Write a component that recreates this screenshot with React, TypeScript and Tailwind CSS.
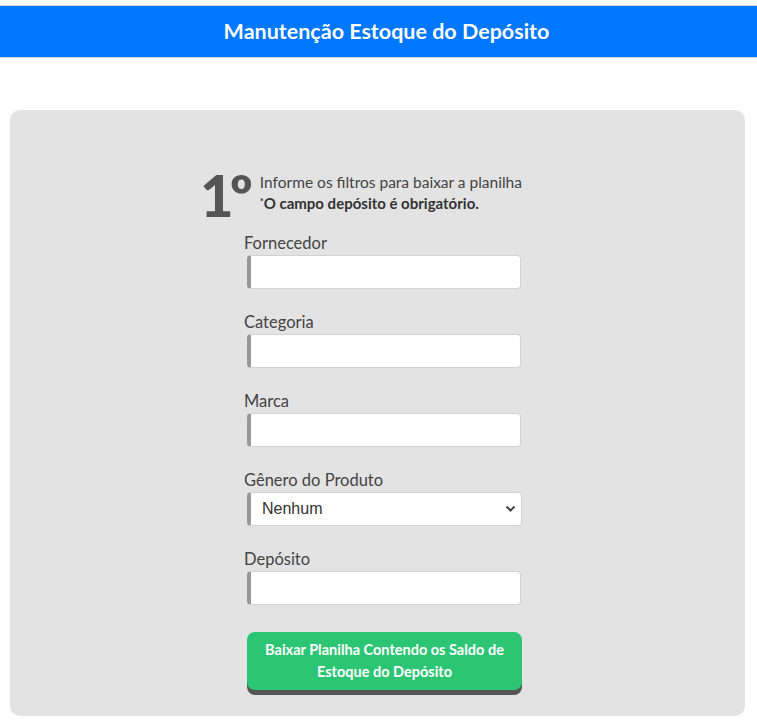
import React, { useState } from 'react';

const font = { fontFamily: 'Lato, "Open Sans", sans-serif' };

const Field = ({ label, value, onChange }: { label: string; value: string; onChange: (v: string) => void }) => (
    <div className="flex flex-col">
        <label className="text-[16.5px] text-[#444] leading-[20px]">{label}</label>
        <input
            type="text"
            value={value}
            onChange={(e) => onChange(e.target.value)}
            className="mt-[2px] ml-[3px] h-[34px] w-[274px] bg-white border border-[#d2d2d2] border-l-[4px] border-l-[#999] rounded-[4px] px-2 text-[15px] outline-none"
        />
    </div>
);

export default function App() {
    const [fornecedor, setFornecedor] = useState('');
    const [categoria, setCategoria] = useState('');
    const [marca, setMarca] = useState('');
    const [genero, setGenero] = useState('Nenhum');
    const [deposito, setDeposito] = useState('');

    return (
        <div className="min-h-screen bg-white pt-[5px]" style={font}>
            <header className="h-[53px] bg-[#0077ff] border-y border-[#d4d4d4] flex items-center justify-center pl-[16px]">
                <h1 className="text-white text-[21.5px] font-bold">Manutenção Estoque do Depósito</h1>
            </header>

            <div className="pl-[10px] pr-[12px] pt-[52px] pb-[9px]">
                <div className="bg-[#e3e3e3] rounded-[10px] pt-[60px] pb-[26px] pl-[190px]">
                    <div className="flex items-start gap-[11px]">
                        <span className="text-[58px] font-black text-[#555] leading-[50px] tracking-[-4px]">1º</span>
                        <div className="pt-[2px] text-[15.5px] text-[#444] leading-[21px]">
                            <p>Informe os filtros para baixar a planilha</p>
                            <p className="font-bold text-[#333] text-[15px]"><sup className="text-[9px]">*</sup>O campo depósito é obrigatório.</p>
                        </div>
                    </div>

                    <form className="ml-[44px] mt-[13px] flex flex-col gap-[23px]" onSubmit={(e) => e.preventDefault()}>
                        <Field label="Fornecedor" value={fornecedor} onChange={setFornecedor} />
                        <Field label="Categoria" value={categoria} onChange={setCategoria} />
                        <Field label="Marca" value={marca} onChange={setMarca} />
                        <div className="flex flex-col">
                            <label className="text-[16.5px] text-[#444] leading-[20px]">Gênero do Produto</label>
                            <div className="relative mt-[2px] ml-[3px] w-[275px]">
                                <select
                                    value={genero}
                                    onChange={(e) => setGenero(e.target.value)}
                                    className="appearance-none h-[34px] w-full bg-white border border-[#d2d2d2] border-l-[4px] border-l-[#999] rounded-[4px] pl-[11px] text-[16px] text-[#333] outline-none"
                                    style={{ fontFamily: '"Liberation Sans", Arial, sans-serif' }}
                                >
                                    <option>Nenhum</option>
                                    <option>Masculino</option>
                                    <option>Feminino</option>
                                    <option>Unissex</option>
                                </select>
                                <svg className="absolute right-[6px] top-[13px] pointer-events-none" width="11" height="8" viewBox="0 0 11 8">
                                    <path d="M1.5 1.5 L5.5 5.5 L9.5 1.5" fill="none" stroke="#444" strokeWidth="2" />
                                </svg>
                            </div>
                        </div>
                        <Field label="Depósito" value={deposito} onChange={setDeposito} />

                        <button
                            type="submit"
                            className="mt-[4px] ml-[3px] w-[275px] h-[58px] bg-[#2bc574] text-white text-[14.5px] font-bold leading-[22px] rounded-[8px] shadow-[0_5px_0_#555] px-3"
                        >
                            Baixar Planilha Contendo os Saldo de Estoque do Depósito
                        </button>
                    </form>
                </div>
            </div>
        </div>
    );
}
